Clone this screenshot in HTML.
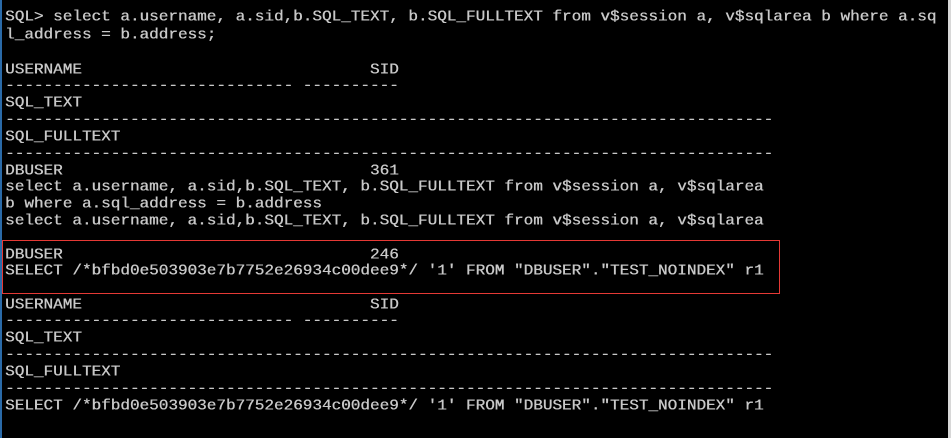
<!DOCTYPE html>
<html><head><meta charset="utf-8"><style>
html,body{margin:0;padding:0;background:#000;width:951px;height:438px;overflow:hidden;position:relative}
.l{position:absolute;left:5px;font-family:"Liberation Mono",monospace;font-size:16px;line-height:17px;color:#c8c8c8;white-space:pre;transform:scaleY(0.92);transform-origin:left center;text-shadow:0.4px 0 0 #c8c8c8}
#lb{position:absolute;left:0;top:0;width:2px;height:438px;background:#2a6aa8}
#rb{position:absolute;right:0;top:0;width:3px;height:438px;background:#d8d8d8}
#box{position:absolute;left:2px;top:240px;width:776px;height:52px;border:1px solid #e53935}
</style></head><body>
<div id="lb"></div><div id="rb"></div><div id="box"></div>
<div class="l" style="top:8.5px">SQL&gt; select a.username, a.sid,b.SQL_TEXT, b.SQL_FULLTEXT from v$session a, v$sqlarea b where a.sq</div>
<div class="l" style="top:26.5px">l_address = b.address;</div>
<div class="l" style="top:61.5px">USERNAME                              SID</div>
<div class="l" style="top:77.5px">------------------------------ ----------</div>
<div class="l" style="top:94.5px">SQL_TEXT</div>
<div class="l" style="top:111.5px">--------------------------------------------------------------------------------</div>
<div class="l" style="top:128.5px">SQL_FULLTEXT</div>
<div class="l" style="top:145.5px">--------------------------------------------------------------------------------</div>
<div class="l" style="top:162.5px">DBUSER                                361</div>
<div class="l" style="top:178.5px">select a.username, a.sid,b.SQL_TEXT, b.SQL_FULLTEXT from v$session a, v$sqlarea</div>
<div class="l" style="top:195.5px">b where a.sql_address = b.address</div>
<div class="l" style="top:212.5px">select a.username, a.sid,b.SQL_TEXT, b.SQL_FULLTEXT from v$session a, v$sqlarea</div>
<div class="l" style="top:246.5px">DBUSER                                246</div>
<div class="l" style="top:262.5px">SELECT /*bfbd0e503903e7b7752e26934c00dee9*/ '1' FROM "DBUSER"."TEST_NOINDEX" r1</div>
<div class="l" style="top:296.5px">USERNAME                              SID</div>
<div class="l" style="top:312.5px">------------------------------ ----------</div>
<div class="l" style="top:329.5px">SQL_TEXT</div>
<div class="l" style="top:346.5px">--------------------------------------------------------------------------------</div>
<div class="l" style="top:363.5px">SQL_FULLTEXT</div>
<div class="l" style="top:380.5px">--------------------------------------------------------------------------------</div>
<div class="l" style="top:397.5px">SELECT /*bfbd0e503903e7b7752e26934c00dee9*/ '1' FROM "DBUSER"."TEST_NOINDEX" r1</div>
</body></html>
